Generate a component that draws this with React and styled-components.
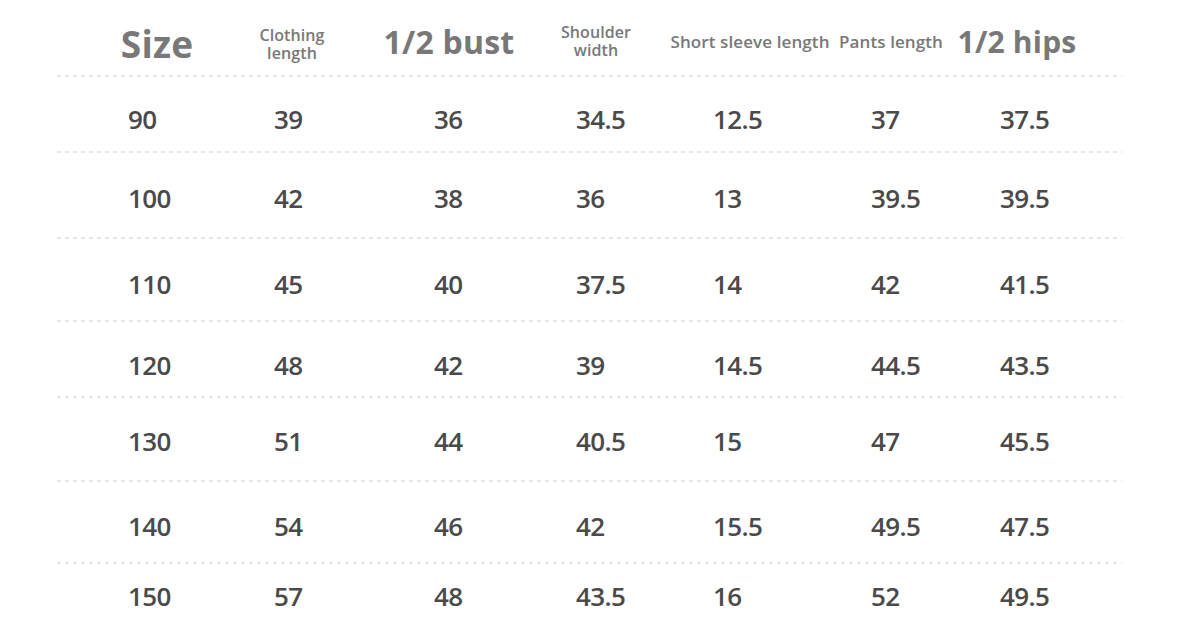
import React from 'react';
import styled, { createGlobalStyle } from 'styled-components';

const GlobalStyle = createGlobalStyle`
  html, body {
    margin: 0;
    padding: 0;
    background: #fff;
  }
  body {
    font-family: "Open Sans", "Noto Sans", sans-serif;
  }
`;

const COLUMNS = '146px 160px 142px 137px 158px 129px 1fr';

const headers = [
  { label: 'Size', size: 37, shift: 29, drop: 3 },
  { label: ['Clothing', 'length'], size: 16, shift: 18, drop: 2 },
  { label: '1/2 bust', size: 32, shift: 15 },
  { label: ['Shoulder', 'width'], size: 16, shift: 20, drop: -1 },
  { label: 'Short sleeve length', size: 17, shift: 37 },
  { label: 'Pants length', size: 17, shift: 20 },
  { label: '1/2 hips', size: 30, shift: 17 },
];

const rows = [
  { height: 74, pad: 27, cells: ['90', '39', '36', '34.5', '12.5', '37', '37.5'] },
  { height: 84, pad: 30, cells: ['100', '42', '38', '36', '13', '39.5', '39.5'] },
  { height: 81, pad: 30, cells: ['110', '45', '40', '37.5', '14', '42', '41.5'] },
  { height: 74, pad: 28, cells: ['120', '48', '42', '39', '14.5', '44.5', '43.5'] },
  { height: 82, pad: 28, cells: ['130', '51', '44', '40.5', '15', '47', '45.5'] },
  { height: 80, pad: 29, cells: ['140', '54', '46', '42', '15.5', '49.5', '47.5'] },
  { height: 76, pad: 17, cells: ['150', '57', '48', '43.5', '16', '52', '49.5'] },
];

const Page = styled.div`
  width: 1200px;
  height: 638px;
  overflow: hidden;
  padding-left: 57px;
  box-sizing: border-box;
`;

const Table = styled.div`
  width: 1065px;
  display: flex;
  flex-direction: column;
`;

const HeaderRow = styled.div`
  display: grid;
  grid-template-columns: ${COLUMNS};
  padding-left: 71px;
  height: 75px;
  padding-top: 8px;
  box-sizing: border-box;
  align-items: center;
`;

const HeaderCell = styled.div`
  width: 0;
  margin-left: ${p => p.$shift}px;
  margin-top: ${p => (p.$drop || 0) * 2}px;
  display: flex;
  justify-content: center;
  white-space: nowrap;
  color: #787878;
  font-weight: ${p => (p.$size > 20 ? 700 : 600)};
  font-size: ${p => p.$size}px;
  line-height: ${p => (p.$size > 20 ? 1.1 : '18px')};
  text-align: center;
  letter-spacing: ${p => (p.$size > 20 ? '0.2px' : '0.1px')};
`;

const Stack = styled.span`
  display: flex;
  flex-direction: column;
  align-items: center;
`;

const Line = styled.span`
  display: block;
  height: 18px;
`;

const Divider = styled.div`
  height: 2px;
  width: 100%;
  background-image: repeating-linear-gradient(
    to right,
    #e6e6e6 0,
    #e6e6e6 4px,
    transparent 4px,
    transparent 8px
  );
`;

const Row = styled.div`
  display: grid;
  grid-template-columns: ${COLUMNS};
  padding-left: 71px;
  height: ${p => p.$height}px;
  padding-top: ${p => p.$pad}px;
  box-sizing: border-box;
  align-items: start;
`;

const Cell = styled.div`
  color: #4a4a4a;
  font-size: 26px;
  font-weight: 600;
  line-height: 30px;
  letter-spacing: -0.6px;
  white-space: nowrap;
`;

export default function App() {
  return (
    <>
      <GlobalStyle />
      <Page>
        <Table>
          <HeaderRow>
            {headers.map((h, i) => (
              <HeaderCell key={i} $shift={h.shift} $size={h.size} $drop={h.drop}>
                {Array.isArray(h.label) ? (
                  <Stack>
                    {h.label.map(l => <Line key={l}>{l}</Line>)}
                  </Stack>
                ) : h.label}
              </HeaderCell>
            ))}
          </HeaderRow>
          {rows.map(r => (
            <React.Fragment key={r.cells[0]}>
              <Divider />
              <Row $height={r.height} $pad={r.pad}>
                {r.cells.map((c, j) => <Cell key={j}>{c}</Cell>)}
              </Row>
            </React.Fragment>
          ))}
        </Table>
      </Page>
    </>
  );
}
